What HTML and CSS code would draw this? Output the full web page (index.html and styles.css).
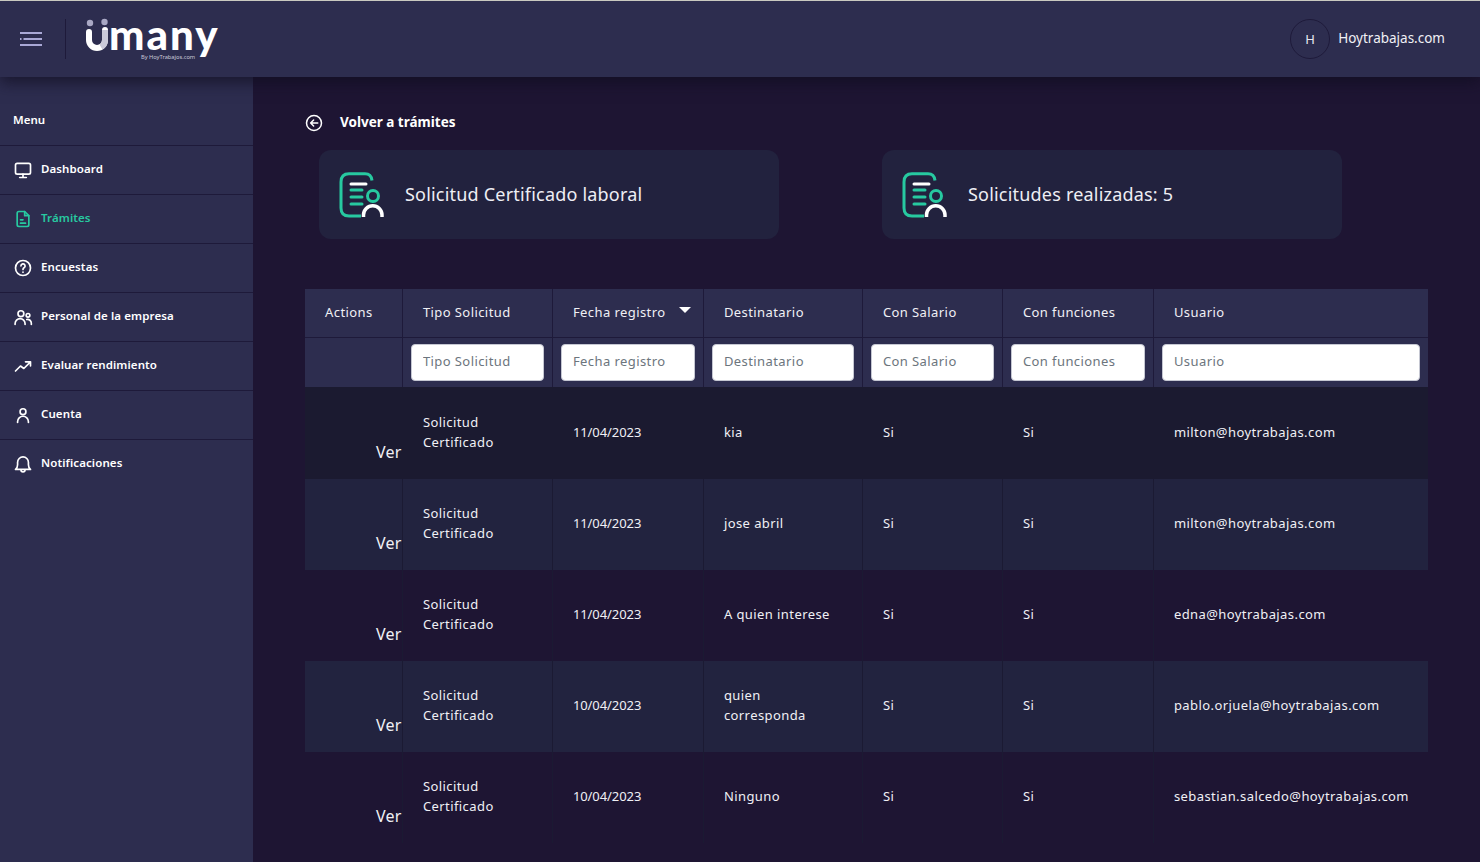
FILE: index.html
```html
<!DOCTYPE html>
<html lang="es">
<head>
<meta charset="utf-8">
<title>Umany</title>
<link rel="stylesheet" href="styles.css">
</head>
<body>
<header class="topbar">
  <div class="topbar-left">
    <svg class="burger" viewBox="0 0 22 14" width="22" height="14"><path d="M0 1H22M3.500 7H22M0 13H22M0 7H1.500" fill="none" stroke="#a9a8d6" stroke-width="2"/></svg>
    <span class="divider"></span>
    <div class="logo">
      <div class="logo-main">
        <svg class="logo-u" viewBox="0 0 24 34" width="24" height="34"><circle cx="5" cy="5" r="3.200" fill="#a9a8c4"/><circle cx="19.500" cy="4" r="3.200" fill="#a9a8c4"/><path d="M4 14V22A8 8 0 0 0 20 22V12" fill="none" stroke="#fff" stroke-width="6" stroke-linecap="round"/><path d="M20 12V22A8 8 0 0 1 16 29" fill="none" stroke="#c9c8d8" stroke-width="6"/></svg>
        <span class="logo-text">many</span>
      </div>
      <span class="logo-sub">By HoyTrabajos.com</span>
    </div>
  </div>
  <div class="user">
    <span class="avatar">H</span>
    <span class="user-name">Hoytrabajas.com</span>
  </div>
</header>
<div class="body-row">
  <nav class="sidebar">
    <div class="menu-title">Menu</div>
    <a class="nav-item"><svg class="ico" viewBox="0 0 24 24"><rect x="3" y="4" width="18" height="13" rx="2"/><path d="M12 17v3M8 21h8"/></svg>Dashboard</a>
    <a class="nav-item active"><svg class="ico" viewBox="0 0 24 24"><path d="M14 3H7a2 2 0 0 0-2 2v14a2 2 0 0 0 2 2h10a2 2 0 0 0 2-2V8z"/><path d="M14 3v5h5M9 13h3M9 17h6"/></svg>Trámites</a>
    <a class="nav-item"><svg class="ico" viewBox="0 0 24 24"><circle cx="12" cy="12" r="9"/><path d="M9.500 9.500a2.500 2.500 0 1 1 3.700 2.200c-.8.500-1.200 1-1.200 2M12 16.800v.2"/></svg>Encuestas</a>
    <a class="nav-item"><svg class="ico" viewBox="0 0 24 24"><circle cx="9.500" cy="8" r="3.500"/><circle cx="18" cy="10" r="2.200"/><path d="M2.500 21v-1a6 6 0 0 1 12 0v1M16.500 15a4.500 4.500 0 0 1 5.500 4.500V21"/></svg>Personal de la empresa</a>
    <a class="nav-item"><svg class="ico" viewBox="0 0 24 24"><path d="M3 18l6-6 4 3 8-8M15 7h6v5"/></svg>Evaluar rendimiento</a>
    <a class="nav-item"><svg class="ico" viewBox="0 0 24 24"><circle cx="12" cy="8" r="3.500"/><path d="M5.500 21v-1a6.500 6.500 0 0 1 13 0v1"/></svg>Cuenta</a>
    <a class="nav-item"><svg class="ico" viewBox="0 0 24 24"><path d="M3 18.500h18c-2-1.500-2.500-3-2.500-5.500V10a6.500 6.500 0 0 0-13 0v3c0 2.500-.5 4-2.500 5.500zM9.500 19a2.500 2.500 0 0 0 5 0"/></svg>Notificaciones</a>
  </nav>
  <main class="content">
    <div class="back">
      <svg class="back-ico" viewBox="0 0 24 24"><circle cx="12" cy="12" r="10"/><path d="M17 12H7.500M11.500 8l-4 4 4 4"/></svg>
      <span>Volver a trámites</span>
    </div>
    <div class="cards">
      <section class="card">
        <svg class="card-ico" viewBox="0 0 46 46" width="46" height="46"><path d="M33 8.500C32.500 4 30 1.800 26 1.800H10C5 1.800 2 4.500 2 10V36C2 41.500 5 44 10 44H22" fill="none" stroke="#27c9a0" stroke-width="3"/><path d="M12 12H27" fill="none" stroke="#fff" stroke-width="3" stroke-linecap="round"/><path d="M12 18H23M12 25H23M12 32H23" fill="none" stroke="#27c9a0" stroke-width="3" stroke-linecap="round"/><circle cx="34" cy="24" r="5.500" fill="none" stroke="#27c9a0" stroke-width="3"/><path d="M24.500 45V43A9 9 0 0 1 43 43V45" fill="none" stroke="#fff" stroke-width="3.500"/></svg>
        <span>Solicitud Certificado laboral</span>
      </section>
      <section class="card">
        <svg class="card-ico" viewBox="0 0 46 46" width="46" height="46"><path d="M33 8.500C32.500 4 30 1.800 26 1.800H10C5 1.800 2 4.500 2 10V36C2 41.500 5 44 10 44H22" fill="none" stroke="#27c9a0" stroke-width="3"/><path d="M12 12H27" fill="none" stroke="#fff" stroke-width="3" stroke-linecap="round"/><path d="M12 18H23M12 25H23M12 32H23" fill="none" stroke="#27c9a0" stroke-width="3" stroke-linecap="round"/><circle cx="34" cy="24" r="5.500" fill="none" stroke="#27c9a0" stroke-width="3"/><path d="M24.500 45V43A9 9 0 0 1 43 43V45" fill="none" stroke="#fff" stroke-width="3.500"/></svg>
        <span>Solicitudes realizadas: 5</span>
      </section>
    </div>
    <table class="grid">
      <colgroup>
        <col class="c1"><col class="c2"><col class="c3"><col class="c4"><col class="c5"><col class="c6"><col class="c7">
      </colgroup>
      <thead>
        <tr class="head-row">
          <th class="th-actions">Actions</th>
          <th>Tipo Solicitud</th>
          <th class="sorted">Fecha registro<span class="caret"></span></th>
          <th>Destinatario</th>
          <th>Con Salario</th>
          <th>Con funciones</th>
          <th>Usuario</th>
        </tr>
        <tr class="filter-row">
          <th></th>
          <th><input placeholder="Tipo Solicitud"></th>
          <th><input placeholder="Fecha registro"></th>
          <th><input placeholder="Destinatario"></th>
          <th><input placeholder="Con Salario"></th>
          <th><input placeholder="Con funciones"></th>
          <th><input placeholder="Usuario"></th>
        </tr>
      </thead>
      <tbody>
        <tr class="odd"><td class="ver">Ver</td><td>Solicitud Certificado</td><td class="date">11/04/2023</td><td>kia</td><td>Si</td><td>Si</td><td>milton@hoytrabajas.com</td></tr>
        <tr class="even"><td class="ver">Ver</td><td>Solicitud Certificado</td><td class="date">11/04/2023</td><td>jose abril</td><td>Si</td><td>Si</td><td>milton@hoytrabajas.com</td></tr>
        <tr class="plain"><td class="ver">Ver</td><td>Solicitud Certificado</td><td class="date">11/04/2023</td><td>A quien interese</td><td>Si</td><td>Si</td><td>edna@hoytrabajas.com</td></tr>
        <tr class="even"><td class="ver">Ver</td><td>Solicitud Certificado</td><td class="date">10/04/2023</td><td>quien corresponda</td><td>Si</td><td>Si</td><td>pablo.orjuela@hoytrabajas.com</td></tr>
        <tr class="plain"><td class="ver">Ver</td><td>Solicitud Certificado</td><td class="date">10/04/2023</td><td>Ninguno</td><td>Si</td><td>Si</td><td>sebastian.salcedo@hoytrabajas.com</td></tr>
      </tbody>
    </table>
  </main>
</div>
</body>
</html>
```
FILE: styles.css
```css
* { box-sizing: border-box; }
html, body { margin: 0; height: 862px; overflow: hidden; }
body {
  background: #1e1533;
  color: #fff;
  font-family: "Noto Sans", "Open Sans", sans-serif;
  font-size: 14px;
  display: flex;
  flex-direction: column;
}
.topbar {
  height: 77px;
  flex: none;
  background: #2d2d4f;
  border-top: 1px solid #c9c9c0;
  display: flex;
  align-items: center;
  justify-content: space-between;
  padding: 0 35px 0 20px;
  box-shadow: 0 6px 14px rgba(15, 12, 30, .65);
  position: relative;
  z-index: 2;
}
.topbar-left { display: flex; align-items: center; }
.burger { display: block; }
.divider { width: 1px; height: 40px; background: #1e1a3a; margin-left: 23px; margin-right: 19px; }
.logo { display: flex; flex-direction: column; width: 134px; }
.logo-main { display: flex; align-items: flex-start; height: 34px; width: 136px; }
.logo-u { flex: none; }
.logo-text {
  font-family: "Lato", sans-serif;
  font-weight: 900;
  font-size: 42px;
  line-height: 30px;
  letter-spacing: 2px;
  margin-top: 1px;
}
.logo-sub { font-size: 5.700px; line-height: 6px; color: #c9c9d9; margin-left: 56px; margin-top: 2px; white-space: nowrap; width: 55px; }
.user { display: flex; align-items: center; gap: 8px; }
.avatar {
  width: 40px; height: 40px; border-radius: 50%;
  border: 1px solid #1e1a3a;
  display: flex; align-items: center; justify-content: center;
  font-size: 13px; color: #e8e8f0; padding-bottom: 1px;
}
.user-name { font-size: 13.500px; color: #f0f0f5; padding-bottom: 2px; }
.body-row { flex: 1; display: flex; min-height: 0; }
.sidebar { width: 253px; flex: none; background: #2d2d4f; }
.menu-title {
  height: 69px; padding: 35px 13px 0;
  font-size: 11.500px; font-weight: 600; line-height: 16px;
  border-bottom: 1px solid #1e1a3a;
}
.nav-item {
  height: 49px;
  display: flex; align-items: center; gap: 8px;
  padding: 0 13px 4px;
  font-size: 11.500px; font-weight: 600; letter-spacing: .1px;
  border-bottom: 1px solid #1e1a3a;
  color: #fff;
}
.nav-item:last-child { border-bottom: 0; }
.nav-item.active { color: #27c9a0; }
.ico { width: 20px; height: 20px; flex: none; fill: none; stroke: currentColor; stroke-width: 2; stroke-linecap: round; stroke-linejoin: round; margin-top: 3px; }
.content { flex: 1; min-width: 0; padding: 33px 52px 0; }
.back { display: flex; align-items: center; gap: 17px; font-size: 13.500px; font-weight: 700; height: 24px; }
.back-ico { width: 18px; height: 18px; fill: none; stroke: #fff; stroke-width: 2; stroke-linecap: round; stroke-linejoin: round; margin-top: 1px; }
.cards { display: flex; gap: 103px; padding-left: 14px; margin-top: 16px; }
.card {
  width: 460px; height: 89px;
  background: #22223e;
  border-radius: 12px;
  display: flex; align-items: center; gap: 20px;
  padding-left: 20px;
  font-size: 18px;
  letter-spacing: .2px;
  color: #eeeef4;
}
.card span { padding-bottom: 2px; }
.grid {
  width: 1123px;
  margin-top: 50px;
  border-collapse: collapse;
  table-layout: fixed;
  font-size: 13px;
  letter-spacing: .42px;
  color: #f0f0f5;
}
.c1 { width: 97px; } .c2 { width: 150px; } .c3 { width: 151px; } .c4 { width: 159px; }
.c5 { width: 140px; } .c6 { width: 151px; } .c7 { width: 275px; }
.grid th, .grid td { border-right: 1px solid #1e1a3a; padding: 0 20px 2px 20.400px; text-align: left; font-weight: 400; }
.grid th:last-child, .grid td:last-child { border-right: 0; padding-right: 10px; }
.grid thead th { background: #2d2d4f; }
.grid .th-actions { padding-left: 20px; }
.head-row th { height: 48px; border-bottom: 1px solid #1e1a3a; }
.sorted { position: relative; }
.caret {
  position: absolute; top: 18px; right: 12px;
  width: 0; height: 0;
  border-left: 6px solid transparent; border-right: 6px solid transparent; border-top: 6px solid #fff;
}
.grid .filter-row th { height: 50px; padding: 0 8px; }
.grid .filter-row th:last-child { padding-right: 8px; }
.filter-row input {
  display: block;
  width: 100%; height: 37px;
  background: #fff;
  border: 1px solid #c5c7d2;
  border-radius: 4px;
  padding: 0 11px 2px 11.400px;
  font: inherit;
  letter-spacing: inherit;
  outline: 0;
}
.filter-row input::placeholder { color: #6c757d; opacity: 1; }
tbody tr { height: 91px; }
tbody tr.odd { height: 92px; }
tbody td { line-height: 20px; }
.grid tbody td { padding-bottom: 4px; }
.grid tbody .odd td { padding-bottom: 3px; }
.grid td.date { letter-spacing: -.08px; }
.odd td { background: #1b1a30; border-right-color: #1b1a30; }
.even td { background: #22233f; border-right-color: #1b1a33; }
.plain td { background: #1e1533; border-right-color: #1b1a33; }
.grid tbody td.ver {
  text-align: right;
  font-size: 16px;
  letter-spacing: .2px;
  padding: 36px 0 0 0;
}
.grid tbody .odd td.ver { padding-top: 37px; padding-bottom: 0; }
```
